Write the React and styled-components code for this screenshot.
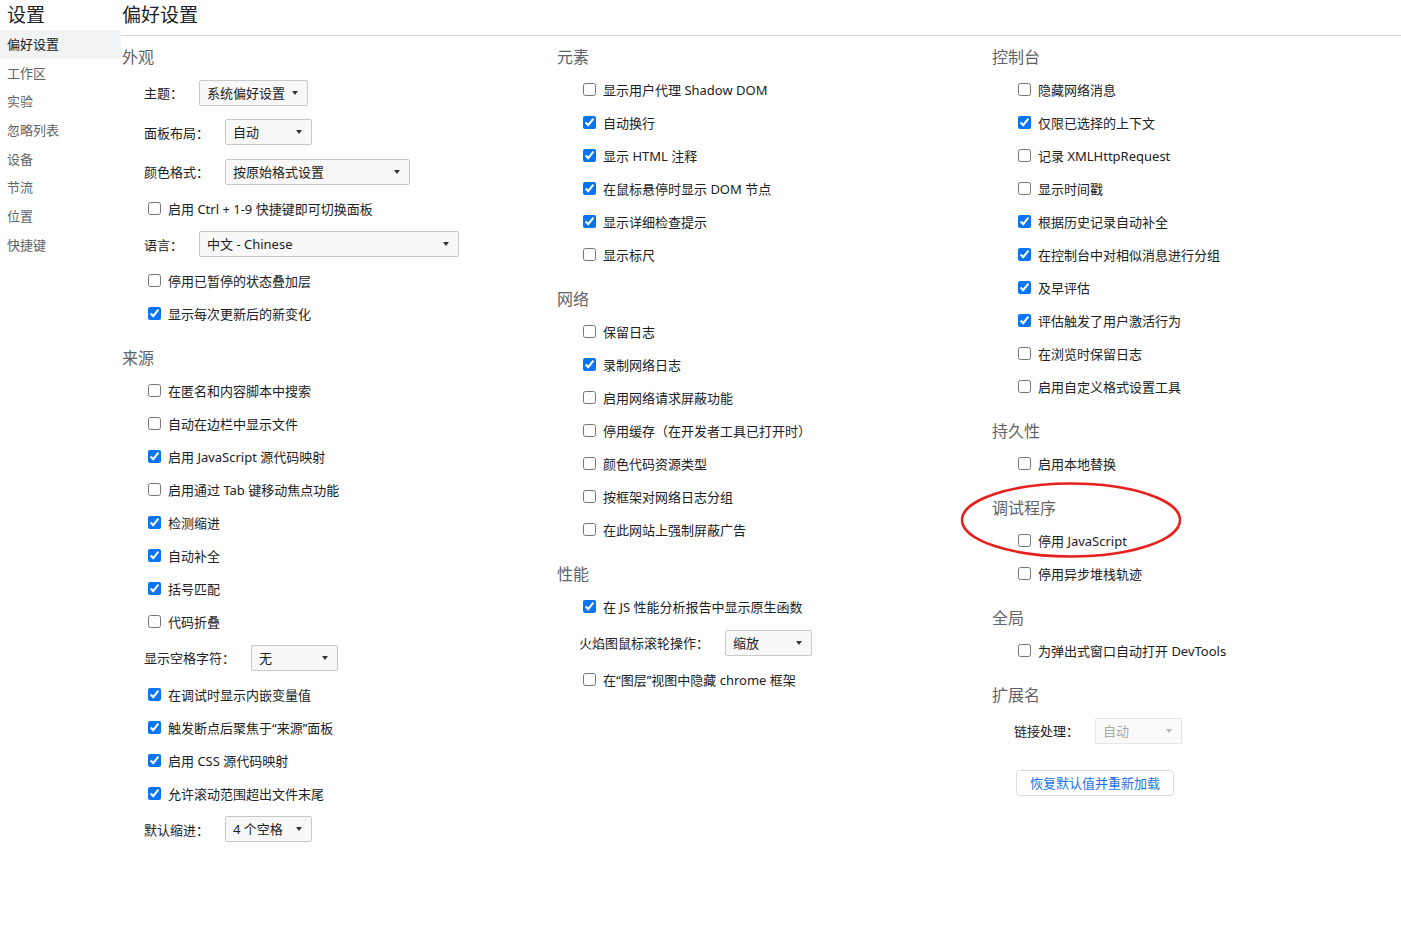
import React from 'react';
import styled, { createGlobalStyle } from 'styled-components';

const GlobalStyle = createGlobalStyle`
  body {
    margin: 0;
    background: #fff;
    font-family: "Noto Sans", "Noto Sans CJK SC", sans-serif;
    color: #202124;
  }
`;

const Page = styled.div`
  position: relative;
  display: flex;
  width: 1401px;
  min-height: 931px;
`;

const Sidebar = styled.nav`
  width: 121px;
  flex: none;
`;

const SideTitle = styled.div`
  height: 30px;
  line-height: 30px;
  padding-left: 7px;
  font-size: 19px;
  color: #202124;
`;

const SideItem = styled.div`
  height: 28.7px;
  line-height: 28.7px;
  padding-left: 7px;
  font-size: 13px;
  color: ${(p) => (p.$active ? '#202124' : '#5f6368')};
  background: ${(p) => (p.$active ? '#f1f3f4' : 'transparent')};
`;

const Main = styled.main`
  flex: 1;
`;

const Header = styled.h1`
  margin: 0;
  height: 35px;
  line-height: 31px;
  padding-left: 1px;
  font-size: 19px;
  font-weight: normal;
  color: #202124;
  border-bottom: 1px solid #d6d6d6;
`;

const Columns = styled.div`
  display: grid;
  grid-template-columns: repeat(3, 435px);
  padding-left: 1px;
`;

const Column = styled.div`
  display: flex;
  flex-direction: column;
`;

const SectionTitle = styled.div`
  height: 32px;
  line-height: 32px;
  margin-top: ${(p) => (p.$first ? '5px' : '12px')};
  font-size: 16px;
  color: #5f6368;
`;

const CheckRow = styled.label`
  display: flex;
  align-items: center;
  gap: 7px;
  height: 33px;
  padding-left: 26px;
  font-size: 13px;
  color: #202124;
`;

const Box = styled.input`
  width: 13px;
  height: 13px;
  margin: 0;
  accent-color: #0a74f6;
`;

const SelectRow = styled.div`
  display: flex;
  align-items: center;
  height: 39.5px;
  padding-left: 22px;
  font-size: 13px;
  color: #202124;
`;

const SelectLabel = styled.span`
  margin-right: 16px;
`;

const Select = styled.div`
  position: relative;
  box-sizing: border-box;
  height: 26px;
  line-height: 24px;
  padding-left: 7px;
  border: 1px solid ${(p) => (p.$disabled ? '#e6e6e6' : '#c8c8c8')};
  border-radius: 2px;
  background: ${(p) => (p.$disabled ? '#fafafa' : '#f8f8f8')};
  color: ${(p) => (p.$disabled ? '#a8a8a8' : '#202124')};

  &::after {
    content: '';
    position: absolute;
    right: 9px;
    top: 10px;
    border-left: 3.5px solid transparent;
    border-right: 3.5px solid transparent;
    border-top: 4px solid ${(p) => (p.$disabled ? '#b8b8b8' : '#333')};
  }
`;

const ResetButton = styled.button`
  align-self: flex-start;
  margin: 19px 0 0 24px;
  height: 26px;
  padding: 0 13px;
  border: 1px solid #dadce0;
  border-radius: 4px;
  background: #fff;
  color: #1a73e8;
  font-family: inherit;
  font-size: 13px;
`;

const Annotation = styled.svg`
  position: absolute;
  left: 958px;
  top: 480px;
  pointer-events: none;
`;

const c = (label, checked = false) => ({ type: 'check', label, checked });
const s = (label, value, width, disabled = false) => ({ type: 'select', label, value, width, disabled });

const columns = [
  [
    {
      title: '外观',
      items: [
        s('主题：', '系统偏好设置', 109),
        s('面板布局：', '自动', 87),
        s('颜色格式：', '按原始格式设置', 185),
        c('启用 Ctrl + 1-9 快捷键即可切换面板'),
        s('语言：', '中文 - Chinese', 260),
        c('停用已暂停的状态叠加层'),
        c('显示每次更新后的新变化', true),
      ],
    },
    {
      title: '来源',
      items: [
        c('在匿名和内容脚本中搜索'),
        c('自动在边栏中显示文件'),
        c('启用 JavaScript 源代码映射', true),
        c('启用通过 Tab 键移动焦点功能'),
        c('检测缩进', true),
        c('自动补全', true),
        c('括号匹配', true),
        c('代码折叠'),
        s('显示空格字符：', '无', 87),
        c('在调试时显示内嵌变量值', true),
        c('触发断点后聚焦于“来源”面板', true),
        c('启用 CSS 源代码映射', true),
        c('允许滚动范围超出文件末尾', true),
        s('默认缩进：', '4 个空格', 87),
      ],
    },
  ],
  [
    {
      title: '元素',
      items: [
        c('显示用户代理 Shadow DOM'),
        c('自动换行', true),
        c('显示 HTML 注释', true),
        c('在鼠标悬停时显示 DOM 节点', true),
        c('显示详细检查提示', true),
        c('显示标尺'),
      ],
    },
    {
      title: '网络',
      items: [
        c('保留日志'),
        c('录制网络日志', true),
        c('启用网络请求屏蔽功能'),
        c('停用缓存（在开发者工具已打开时）'),
        c('颜色代码资源类型'),
        c('按框架对网络日志分组'),
        c('在此网站上强制屏蔽广告'),
      ],
    },
    {
      title: '性能',
      items: [
        c('在 JS 性能分析报告中显示原生函数', true),
        s('火焰图鼠标滚轮操作：', '缩放', 87),
        c('在“图层”视图中隐藏 chrome 框架'),
      ],
    },
  ],
  [
    {
      title: '控制台',
      items: [
        c('隐藏网络消息'),
        c('仅限已选择的上下文', true),
        c('记录 XMLHttpRequest'),
        c('显示时间戳'),
        c('根据历史记录自动补全', true),
        c('在控制台中对相似消息进行分组', true),
        c('及早评估', true),
        c('评估触发了用户激活行为', true),
        c('在浏览时保留日志'),
        c('启用自定义格式设置工具'),
      ],
    },
    { title: '持久性', items: [c('启用本地替换')] },
    { title: '调试程序', items: [c('停用 JavaScript'), c('停用异步堆栈轨迹')] },
    { title: '全局', items: [c('为弹出式窗口自动打开 DevTools')] },
    { title: '扩展名', items: [s('链接处理：', '自动', 87, true)] },
  ],
];

const navItems = ['偏好设置', '工作区', '实验', '忽略列表', '设备', '节流', '位置', '快捷键'];

function Item({ item }) {
  if (item.type === 'select') {
    return (
      <SelectRow>
        <SelectLabel>{item.label}</SelectLabel>
        <Select $disabled={item.disabled} style={{ width: item.width }}>
          {item.value}
        </Select>
      </SelectRow>
    );
  }
  return (
    <CheckRow>
      <Box type="checkbox" defaultChecked={item.checked} />
      {item.label}
    </CheckRow>
  );
}

export default function App() {
  return (
    <Page>
      <GlobalStyle />
      <Sidebar>
        <SideTitle>设置</SideTitle>
        {navItems.map((name, i) => (
          <SideItem key={name} $active={i === 0}>
            {name}
          </SideItem>
        ))}
      </Sidebar>
      <Main>
        <Header>偏好设置</Header>
        <Columns>
          {columns.map((sections, ci) => (
            <Column key={ci}>
              {sections.map((sec, si) => (
                <React.Fragment key={sec.title}>
                  <SectionTitle $first={si === 0}>{sec.title}</SectionTitle>
                  {sec.items.map((item) => (
                    <Item key={item.label} item={item} />
                  ))}
                </React.Fragment>
              ))}
              {ci === 2 && <ResetButton>恢复默认值并重新加载</ResetButton>}
            </Column>
          ))}
        </Columns>
      </Main>
      <Annotation width="226" height="82" viewBox="0 0 226 82">
        <ellipse cx="113" cy="40" rx="109" ry="36.5" fill="none" stroke="#e8201c" strokeWidth="2.5" />
      </Annotation>
    </Page>
  );
}
